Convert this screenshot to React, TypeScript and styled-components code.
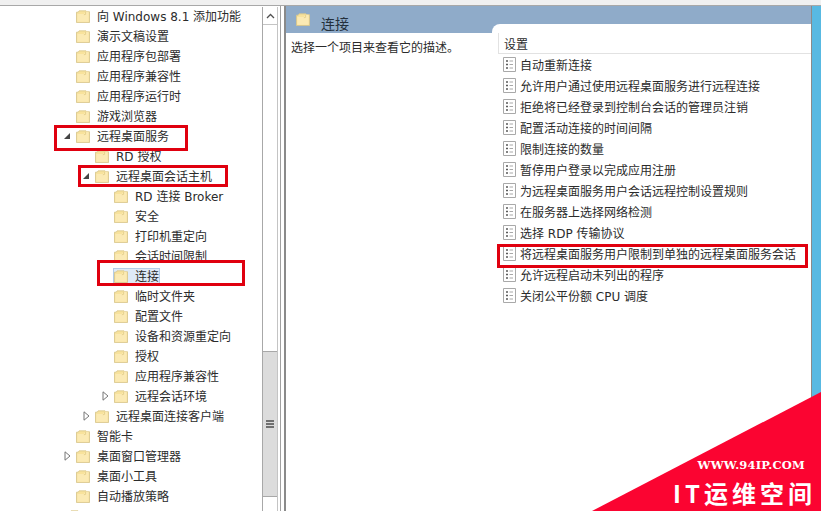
import React from 'react';
import styled, { createGlobalStyle } from 'styled-components';

const GlobalStyle = createGlobalStyle`
  html, body {
    margin: 0;
    padding: 0;
    background: #fff;
  }
  body {
    font-family: "DejaVu Sans", "Noto Sans CJK SC", sans-serif;
    font-size: 12px;
    color: #2b2b2b;
  }
`;

const Screen = styled.div`
  position: relative;
  width: 821px;
  height: 511px;
  overflow: hidden;
  display: flex;
  flex-direction: column;
`;

const TopStrip = styled.div`
  height: 5px;
  flex: none;
  background: #f0f0f0;
  border-bottom: 1px solid #a8a8a8;
`;

const Body = styled.div`
  flex: 1;
  min-height: 0;
  display: flex;
`;

const TreePane = styled.div`
  width: 280px;
  flex: none;
  display: flex;
  border-right: 1px solid #a0a0a0;
  box-sizing: content-box;
`;

const Tree = styled.div`
  flex: 1;
  min-width: 0;
  overflow: hidden;
`;

const Row = styled.div<{ $level: number }>`
  height: 20px;
  display: flex;
  align-items: center;
  padding-left: ${p => 59 + p.$level * 19}px;
  white-space: nowrap;
`;

const Expander = styled.span`
  width: 16px;
  height: 20px;
  flex: none;
  display: flex;
  align-items: center;
  justify-content: center;
`;

const NodeLabel = styled.span<{ $selected?: boolean }>`
  display: flex;
  align-items: center;
  gap: 7px;
  height: 16px;
  padding: 0 1px;
  box-shadow: ${p => (p.$selected ? 'inset 0 0 0 1px #b4cde8' : 'none')};
  background: ${p => (p.$selected ? '#dfeaf7' : 'transparent')};
`;

const NodeText = styled.span`
  margin-bottom: 2px;
`;

const Scrollbar = styled.div`
  width: 16px;
  flex: none;
  margin: 1px 2px 0 0;
  display: flex;
  flex-direction: column;
  border-left: 1px solid #a8a8a8;
  border-right: 1px solid #c4c4c4;
  box-sizing: border-box;
`;

const ScrollButton = styled.div`
  height: 17px;
  flex: none;
  display: flex;
  align-items: center;
  justify-content: center;
  border-bottom: 1px solid #c4c4c4;
`;

const ScrollTrack = styled.div`
  flex: 1;
  padding-top: 326px;
  padding-bottom: 14px;
  display: flex;
`;

const ScrollThumb = styled.div`
  flex: 1;
  background: #dcdcdc;
  border-top: 1px solid #a8a8a8;
  border-bottom: 1px solid #a8a8a8;
  display: flex;
  align-items: center;
  justify-content: center;
`;

const Grip = styled.div`
  width: 8px;
  height: 8px;
  background: repeating-linear-gradient(#707070 0 2px, transparent 2px 3px);
`;

const Gutter = styled.div`
  width: 3px;
  flex: none;
`;

const DetailPane = styled.div`
  flex: 1;
  min-width: 0;
  display: flex;
  flex-direction: column;
  border-left: 2px solid #8a8a8a;
`;

const TitleBand = styled.div`
  height: 27px;
  flex: none;
  display: flex;
  align-items: center;
  gap: 11px;
  padding-left: 10px;
  background: #8fabc9;
  font-size: 14px;
  color: #24303c;
`;

const TitleText = styled.span`
  margin-top: 6px;
`;

const DetailBody = styled.div`
  flex: 1;
  min-height: 0;
  display: flex;
`;

const Description = styled.div`
  width: 206px;
  flex: none;
  padding: 5px 0 0 5px;
  box-sizing: border-box;
`;

const SettingsTab = styled.div`
  flex: 1;
  min-width: 0;
  margin-top: -9px;
  padding: 9px 0 0 6px;
  background: #fff;
  border-top-left-radius: 8px;
`;

const ListHeader = styled.div`
  height: 20px;
  display: flex;
  align-items: center;
  padding-left: 5px;
  border-left: 1px solid #e2e2e2;
  border-bottom: 1px solid #e2e2e2;
`;

const SettingRow = styled.div`
  height: 21px;
  display: flex;
  align-items: center;
  gap: 4px;
  padding-left: 5px;
  white-space: nowrap;
`;

const EdgeStrip = styled.div`
  width: 10px;
  flex: none;
  background: #58b9e2;
  border-left: 1px solid #8a8a8a;
  box-sizing: border-box;
`;

const RedBox = styled.div<{ $x: number; $y: number; $w: number; $h: number }>`
  position: absolute;
  left: ${p => p.$x}px;
  top: ${p => p.$y}px;
  width: ${p => p.$w}px;
  height: ${p => p.$h}px;
  box-sizing: border-box;
  border: 3px solid #e0000f;
`;

const Badge = styled.div`
  position: absolute;
  right: 0;
  bottom: 0;
  width: 229px;
  height: 119px;
  background: #fb0431;
  clip-path: polygon(100% 0, 100% 100%, 0 100%);
  color: #fff;
`;

const BadgeUrl = styled.div`
  position: absolute;
  right: 16px;
  top: 66px;
  font-family: "DejaVu Serif", "Liberation Serif", serif;
  font-size: 11.5px;
  font-weight: 700;
  letter-spacing: 0.2px;
  white-space: nowrap;
`;

const BadgeName = styled.div`
  position: absolute;
  right: 5px;
  top: 86px;
  font-family: "Noto Sans CJK SC", sans-serif;
  font-size: 24px;
  line-height: 30px;
  font-weight: 700;
  letter-spacing: 4px;
  white-space: nowrap;
`;

const Folder = () => (
  <svg width="14" height="13" viewBox="0 0 16 15">
    <path d="M.5 2.5h2l1-1.5h8l1 1h3v12.500H.5z" fill="#f8e29c" stroke="#d8c68c" />
    <path d="M1.500 4.500h7.500l2-2.500h3.500v11.500h-13z" fill="#fbeab4" />
    <path d="M11 2v3l-2 .5" fill="none" stroke="#e3cd86" />
  </svg>
);

const Doc = () => (
  <svg width="13" height="15" viewBox="0 0 13 15">
    <path d="M.5.5h12v14H.5z" fill="#fff" stroke="#a9a9a9" />
    <path d="M3 4h2M3 7.500h2M3 11h2" stroke="#5a5a5a" strokeWidth="1.500" />
    <path d="M6.500 4H10M6.500 7.500H10M6.500 11H10" stroke="#a8a8a8" />
  </svg>
);

const Open = () => (
  <svg width="8" height="8" viewBox="0 0 8 8">
    <path d="M7 1v6H1z" fill="#444" />
  </svg>
);

const Closed = () => (
  <svg width="7" height="10" viewBox="0 0 7 10">
    <path d="M1 .8 6 5 1 9.200z" fill="#fff" stroke="#777" />
  </svg>
);

const ChevronUp = () => (
  <svg width="9" height="6" viewBox="0 0 9 6">
    <path d="M1 5 4.500 1.500 8 5" fill="none" stroke="#505050" strokeWidth="1.300" />
  </svg>
);

type Node = { label: string; level: number; toggle?: 'open' | 'closed'; selected?: boolean };

const nodes: Node[] = [
  { label: '向 Windows 8.1 添加功能', level: 0 },
  { label: '演示文稿设置', level: 0 },
  { label: '应用程序包部署', level: 0 },
  { label: '应用程序兼容性', level: 0 },
  { label: '应用程序运行时', level: 0 },
  { label: '游戏浏览器', level: 0 },
  { label: '远程桌面服务', level: 0, toggle: 'open' },
  { label: 'RD 授权', level: 1 },
  { label: '远程桌面会话主机', level: 1, toggle: 'open' },
  { label: 'RD 连接 Broker', level: 2 },
  { label: '安全', level: 2 },
  { label: '打印机重定向', level: 2 },
  { label: '会话时间限制', level: 2 },
  { label: '连接', level: 2, selected: true },
  { label: '临时文件夹', level: 2 },
  { label: '配置文件', level: 2 },
  { label: '设备和资源重定向', level: 2 },
  { label: '授权', level: 2 },
  { label: '应用程序兼容性', level: 2 },
  { label: '远程会话环境', level: 2, toggle: 'closed' },
  { label: '远程桌面连接客户端', level: 1, toggle: 'closed' },
  { label: '智能卡', level: 0 },
  { label: '桌面窗口管理器', level: 0, toggle: 'closed' },
  { label: '桌面小工具', level: 0 },
  { label: '自动播放策略', level: 0 },
  { label: '', level: -0.4 },
];

const settings = [
  '自动重新连接',
  '允许用户通过使用远程桌面服务进行远程连接',
  '拒绝将已经登录到控制台会话的管理员注销',
  '配置活动连接的时间间隔',
  '限制连接的数量',
  '暂停用户登录以完成应用注册',
  '为远程桌面服务用户会话远程控制设置规则',
  '在服务器上选择网络检测',
  '选择 RDP 传输协议',
  '将远程桌面服务用户限制到单独的远程桌面服务会话',
  '允许远程启动未列出的程序',
  '关闭公平份额 CPU 调度',
];

const App: React.FC = () => {
  return (
    <Screen>
      <GlobalStyle />
      <TopStrip />
      <Body>
        <TreePane>
          <Tree>
            {nodes.map((node, i) => (
              <Row key={i} $level={node.level}>
                <Expander>
                  {node.toggle === 'open' && <Open />}
                  {node.toggle === 'closed' && <Closed />}
                </Expander>
                <NodeLabel $selected={node.selected}>
                  <Folder />
                  <NodeText>{node.label}</NodeText>
                </NodeLabel>
              </Row>
            ))}
          </Tree>
          <Scrollbar>
            <ScrollButton>
              <ChevronUp />
            </ScrollButton>
            <ScrollTrack>
              <ScrollThumb>
                <Grip />
              </ScrollThumb>
            </ScrollTrack>
          </Scrollbar>
        </TreePane>
        <Gutter />
        <DetailPane>
          <TitleBand>
            <Folder />
            <TitleText>连接</TitleText>
          </TitleBand>
          <DetailBody>
            <Description>选择一个项目来查看它的描述。</Description>
            <SettingsTab>
              <ListHeader>设置</ListHeader>
              {settings.map(text => (
                <SettingRow key={text}>
                  <Doc />
                  {text}
                </SettingRow>
              ))}
            </SettingsTab>
          </DetailBody>
        </DetailPane>
        <EdgeStrip />
      </Body>
      <RedBox $x={54} $y={125} $w={134} $h={26} />
      <RedBox $x={78} $y={165} $w={150} $h={22} />
      <RedBox $x={97} $y={260} $w={148} $h={26} />
      <RedBox $x={497} $y={244} $w={311} $h={24} />
      <Badge>
        <BadgeUrl>WWW.94IP.COM</BadgeUrl>
        <BadgeName>IT运维空间</BadgeName>
      </Badge>
    </Screen>
  );
};

export default App;
